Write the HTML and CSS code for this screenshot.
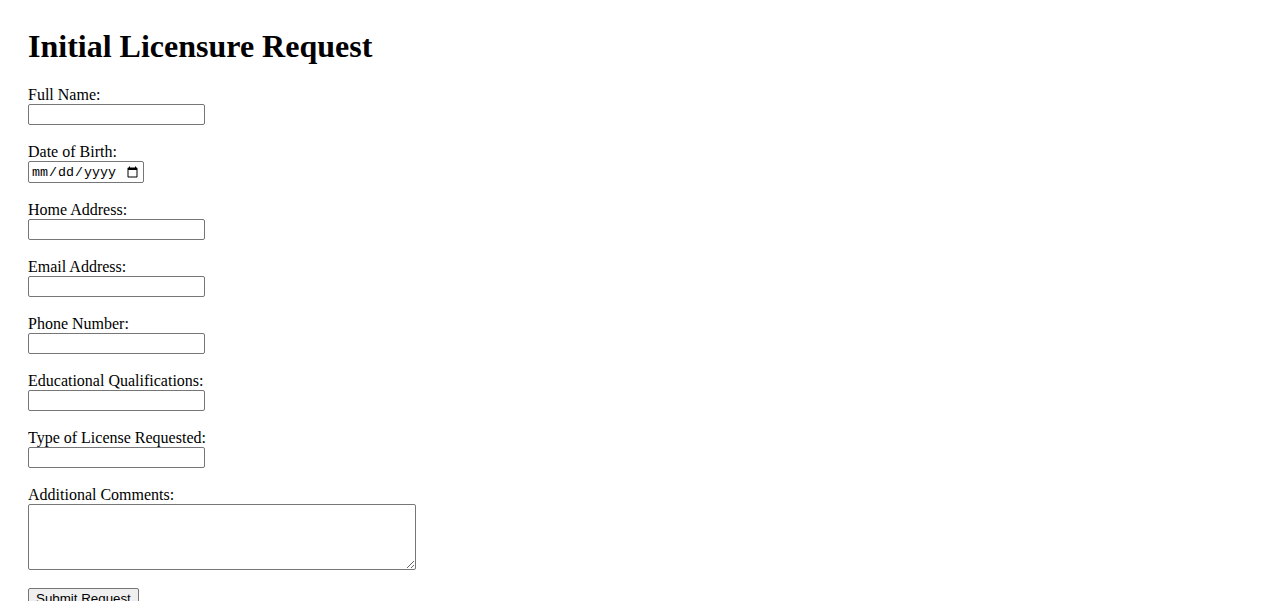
FILE: index.html
```html
<!DOCTYPE html>
<html lang="en">
<head>
<meta charset="utf-8">
<title>Initial Licensure Request</title>
<link rel="stylesheet" href="styles.css">
</head>
<body class="page">
<h1 class="title">Initial Licensure Request</h1>
<form class="form">
<label for="name">Full Name:</label><br>
<input class="field" type="text" id="name"><br><br>
<label for="dob">Date of Birth:</label><br>
<input class="field date" type="date" id="dob"><br><br>
<label for="addr">Home Address:</label><br>
<input class="field" type="text" id="addr"><br><br>
<label for="email">Email Address:</label><br>
<input class="field" type="email" id="email"><br><br>
<label for="phone">Phone Number:</label><br>
<input class="field" type="tel" id="phone"><br><br>
<label for="edu">Educational Qualifications:</label><br>
<input class="field" type="text" id="edu"><br><br>
<label for="lic">Type of License Requested:</label><br>
<input class="field" type="text" id="lic"><br><br>
<label for="comments">Additional Comments:</label><br>
<textarea class="comments" id="comments" rows="4" cols="50"></textarea><br><br>
<button class="submit" type="submit">Submit Request</button>
</form>
</body>
</html>
```

FILE: styles.css
```css
.page {
  margin: 28px;
  font-family: "Liberation Serif", "Times New Roman", serif;
  font-size: 16px;
  color: #000;
  background: #fff;
}
.title {
  font-size: 32px;
  font-weight: bold;
  margin: 0 0 21.44px 0;
}
.form {
  margin: 0;
}
.field {
  font-family: "Liberation Sans", Arial, sans-serif;
  font-size: 13.333px;
  width: 177px;
  height: 21px;
  box-sizing: border-box;
  border: 1px solid #767676;
  border-radius: 2px;
  padding: 1px 2px;
}
.field.date {
  font-family: "Liberation Mono", monospace;
  width: 116px;
  height: 22px;
}
.comments {
  font-family: "Liberation Mono", monospace;
  font-size: 13.333px;
  width: 388px;
  height: 66px;
  box-sizing: border-box;
  border: 1px solid #767676;
  border-radius: 2px;
  padding: 2px;
  vertical-align: bottom;
}
.submit {
  font-family: "Liberation Sans", Arial, sans-serif;
  font-size: 13.333px;
  padding: 2px 7px;
  border: 1px solid #767676;
  border-radius: 2px;
  background: #efefef;
  color: #000;
}
```
